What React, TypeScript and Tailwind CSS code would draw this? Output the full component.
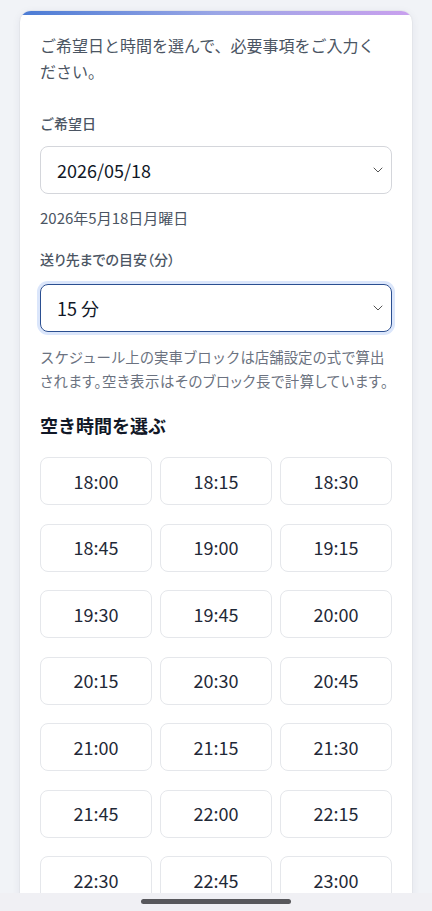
import React from "react";

const times = [
  "18:00","18:15","18:30",
  "18:45","19:00","19:15",
  "19:30","19:45","20:00",
  "20:15","20:30","20:45",
  "21:00","21:15","21:30",
  "21:45","22:00","22:15",
  "22:30","22:45","23:00",
  "23:15","23:30","23:45",
];

function Chevron() {
  return (
    <svg width="10" height="6" viewBox="0 0 10 6" className="shrink-0">
      <path d="M1 1l4 4 4-4" fill="none" stroke="#555" strokeWidth="1" strokeLinecap="round" strokeLinejoin="round" />
    </svg>
  );
}

export default function App() {
  return (
    <div
      className="min-h-[911px] bg-[#f1f3f7] px-[19px] pt-[10px]"
      style={{ fontFamily: '"Noto Sans CJK JP", "Noto Sans", sans-serif' }}
    >
      <div className="overflow-hidden rounded-xl border border-[#e3e5ea] bg-white shadow-[0_2px_8px_rgba(30,40,80,0.06)]">
        <div className="h-[4px] bg-gradient-to-r from-[#4a7bd4] via-[#9aa6e6] to-[#c9a0ee]" />
        <div className="px-5 pt-[17px] pb-8">
          <p className="text-[16px] leading-[26px] text-[#4b5563]">
            ご希望日と時間を選んで、必要事項をご入力く
            <br />
            ださい。
          </p>

          <div className="mt-[29px] text-[14px] font-medium leading-[20px] text-[#4b5563]">ご希望日</div>
          <div className="mt-[13px] flex h-[48px] items-center justify-between rounded-lg border border-[#d4d6db] pl-[16px] pr-[8px]">
            <span className="text-[18px] text-[#111827]">2026/05/18</span>
            <Chevron />
          </div>
          <div className="mt-[14px] text-[15px] leading-[20px] text-[#4b5563]">2026年5月18日月曜日</div>

          <div className="mt-[21px] text-[14px] font-medium leading-[20px] text-[#4b5563] [font-feature-settings:'palt']">送り先までの目安（分）</div>
          <div className="mt-[15px] flex h-[48px] items-center justify-between rounded-lg border border-[#2b4f91] pl-[16px] pr-[8px] shadow-[0_0_0_3px_#dbe6fb]">
            <span className="text-[18px] text-[#111827]">15 分</span>
            <Chevron />
          </div>

          <p className="mt-[13px] text-[14.4px] leading-[24px] text-[#6b7280]">
            <span className="block whitespace-nowrap">スケジュール上の実車ブロックは店舗設定の式で算出</span>
            <span className="block whitespace-nowrap tracking-[0.55px] [font-feature-settings:'palt']">されます。空き表示はそのブロック長で計算しています。</span>
          </p>

          <h2 className="mt-[18px] text-[18px] font-bold leading-[28px] text-[#111827]">空き時間を選ぶ</h2>

          <div className="mt-[18px] grid grid-cols-3 gap-x-[8px] gap-y-[18.5px]">
            {times.map((t) => (
              <button
                key={t}
                className="flex h-[48px] items-center justify-center rounded-lg border border-[#e5e7eb] bg-white text-[18px] text-[#1f2937]"
              >
                {t}
              </button>
            ))}
          </div>
        </div>
      </div>

      <div className="fixed bottom-0 left-0 right-0 flex h-[18px] items-start justify-center bg-[#f0f0f4] pt-[6px]">
        <div className="h-[5px] w-[150px] rounded-full bg-[#58585c]" />
      </div>
    </div>
  );
}
